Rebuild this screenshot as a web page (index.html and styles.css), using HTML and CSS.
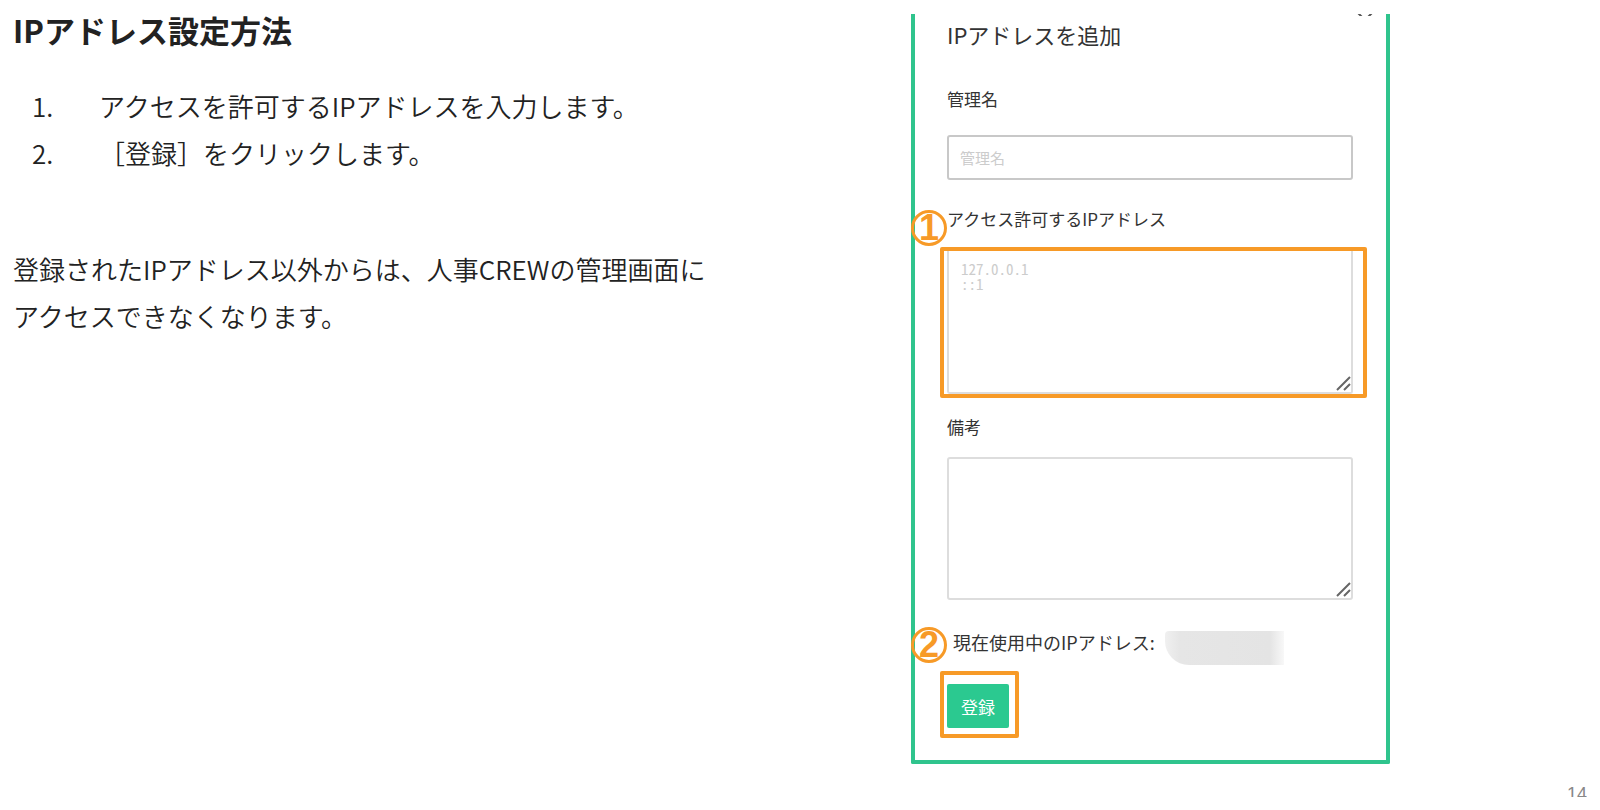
FILE: index.html
```html
<!DOCTYPE html>
<html lang="ja">
<head>
<meta charset="utf-8">
<title>IPアドレス設定方法</title>
<link rel="stylesheet" href="styles.css">
</head>
<body>
<main class="slide">
  <section class="guide">
    <h1 class="guide-title">IPアドレス設定方法</h1>
    <ol class="steps">
      <li class="step"><span class="step-number">1.</span><span>アクセスを許可するIPアドレスを入力します。</span></li>
      <li class="step"><span class="step-number">2.</span><span>［登録］をクリックします。</span></li>
    </ol>
    <p class="note">登録されたIPアドレス以外からは、人事CREWの管理画面に<br>アクセスできなくなります。</p>
  </section>

  <form class="dialog">
    <button class="close" type="button" aria-label="閉じる">
      <svg class="close-icon" viewBox="0 0 16 16"><path d="M1 -1 15 13M15 -1 1 13"/></svg>
    </button>
    <h2 class="dialog-title">IPアドレスを追加</h2>

    <div class="field field-name">
      <label class="label" for="name">管理名</label>
      <input class="control input" id="name" type="text" placeholder="管理名">
    </div>

    <div class="field field-ip">
      <span class="marker">1</span>
      <label class="label" for="ip">アクセス許可するIPアドレス</label>
      <div class="highlight highlight-area">
        <div class="area">
          <textarea class="control textarea textarea-ip" id="ip" placeholder="127.0.0.1&#10;::1"></textarea>
          <svg class="grip" viewBox="0 0 16 16"><path d="M1 15 14 2M8 15 14 9"/></svg>
        </div>
      </div>
    </div>

    <div class="field field-memo">
      <label class="label" for="memo">備考</label>
      <div class="area">
        <textarea class="control textarea" id="memo"></textarea>
        <svg class="grip" viewBox="0 0 16 16"><path d="M1 15 14 2M8 15 14 9"/></svg>
      </div>
    </div>

    <div class="current">
      <span class="marker marker-current">2</span>
      <span class="current-label">現在使用中のIPアドレス:</span>
      <span class="masked"></span>
    </div>

    <div class="highlight highlight-submit">
      <button class="submit" type="button">登録</button>
    </div>
  </form>

  <footer class="page-number">14</footer>
</main>
</body>
</html>
```
FILE: styles.css
```css
* {
  box-sizing: border-box;
}

body {
  margin: 0;
  background: #fff;
  color: #222;
  font-family: "Noto Sans CJK JP", sans-serif;
}

.slide {
  display: grid;
  grid-template-columns: 911fr 479fr 210fr;
  padding-top: 14px;
}

.guide {
  padding-left: 13px;
  font-size: 26px;
  font-weight: 350;
  line-height: 47px;
}

.guide-title {
  margin: 0;
  font-size: 31px;
  font-weight: 700;
  line-height: 32px;
}

.steps {
  margin: 36px 0 0;
  padding: 0;
  list-style: none;
}

.step {
  display: flex;
}

.step-number {
  flex: none;
  width: 86px;
  padding-left: 19px;
}

.note {
  margin: 69px 0 0;
}

.dialog {
  position: relative;
  padding: 4px 33px 22px 32px;
  border: 4px solid #2fc48d;
  border-top: 0;
  border-radius: 0 0 2px 2px;
  color: #333;
}

.close {
  position: absolute;
  top: 0;
  right: 13px;
  display: flex;
  width: 16px;
  height: 2px;
  padding: 0;
  overflow: hidden;
  border: 0;
  background: none;
}

.close-icon {
  flex: none;
  align-self: flex-start;
  width: 16px;
  height: 16px;
  fill: none;
  stroke: #555;
  stroke-width: 2;
}

.dialog-title {
  margin: 0;
  font-size: 22px;
  font-weight: 400;
  line-height: 32px;
}

.field {
  position: relative;
  display: flex;
  flex-direction: column;
}

.field-name {
  gap: 24px;
  margin-top: 37px;
}

.field-ip {
  gap: 16px;
  margin-top: 27px;
}

.field-memo {
  gap: 18px;
  margin-top: 17px;
}

.label {
  font-size: 17px;
  line-height: 24px;
}

.control {
  display: block;
  width: 100%;
  margin: 0;
  padding: 10px 12px;
  border: 1px solid #ccc;
  border-radius: 3px;
  background: #fff;
  color: #333;
  font-family: inherit;
  font-size: 15px;
  outline: 0;
}

.control::placeholder {
  color: #ccc;
  opacity: 1;
}

.input {
  height: 45px;
  border: 2px solid #c8c8c8;
  padding: 0 11px;
}

.area {
  position: relative;
}

.textarea {
  height: 143px;
  border-width: 2px;
  border-color: #ddd;
  resize: none;
}

.textarea-ip {
  border-top: 0;
  border-radius: 0 0 3px 3px;
  font-family: "Noto Sans Mono CJK JP", "Liberation Mono", monospace;
  line-height: 15px;
}

.grip {
  position: absolute;
  right: 1px;
  bottom: 3px;
  width: 16px;
  height: 16px;
  fill: none;
  stroke: #666;
  stroke-width: 2;
}

.highlight {
  border: 4px solid #f79a27;
  border-radius: 2px;
}

.highlight-area {
  margin: 0 -14px 0 -7px;
  padding: 0 10px 0 3px;
}

.highlight-submit {
  width: fit-content;
  margin: 6px 0 0 -7px;
  padding: 9px 6px 6px 3px;
}

.marker {
  position: absolute;
  top: 3px;
  left: -36px;
  display: flex;
  align-items: center;
  justify-content: center;
  width: 36px;
  height: 36px;
  border: 3px solid #f79a27;
  border-radius: 50%;
  color: #f79a27;
  font-family: "Liberation Sans", sans-serif;
  font-size: 36px;
  font-weight: 700;
  line-height: 36px;
}

.marker-current {
  top: -3px;
}

.current {
  position: relative;
  display: flex;
  gap: 10px;
  margin-top: 30px;
  padding-left: 6px;
}

.current-label {
  font-size: 18px;
  line-height: 24px;
}

.masked {
  width: 119px;
  height: 34px;
  margin-top: 1px;
  border-radius: 4px 0 0 24px;
  background: linear-gradient(90deg, #f0f0f0, #e6e6e6 12%, #e4e4e4 88%, #f8f8f8);
}

.submit {
  display: block;
  height: 44px;
  padding: 0 14px;
  border: 0;
  border-radius: 2px;
  background: #2bc990;
  color: #fff;
  font-family: inherit;
  font-size: 17px;
}

.page-number {
  grid-row: 2;
  grid-column: 3;
  justify-self: end;
  height: 12px;
  margin-top: 21px;
  margin-right: 13px;
  overflow: hidden;
  color: #888;
  font-family: "Liberation Sans", sans-serif;
  font-size: 18px;
  line-height: 18px;
}
```
